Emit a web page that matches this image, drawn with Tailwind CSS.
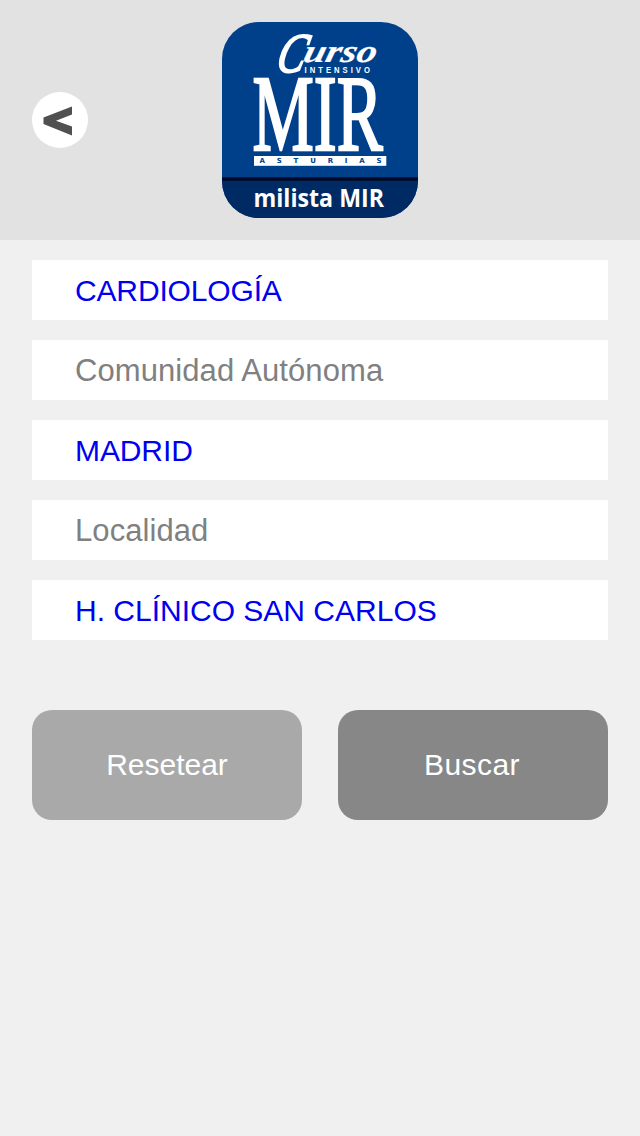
<!DOCTYPE html>
<html lang="es">
<head>
<meta charset="utf-8">
<title>milista MIR</title>
<script src="https://cdn.jsdelivr.net/npm/@tailwindcss/browser@4"></script>
</head>
<body class="min-h-screen bg-[#f0f0f0] font-['Liberation_Sans',Arial,sans-serif] text-[30px]">
<header class="grid h-60 grid-cols-[1fr_196px_1fr] items-center bg-[#e2e2e2] px-8">
  <button aria-label="Volver" class="flex size-14 items-center justify-center rounded-full bg-white">
    <svg class="size-14" viewBox="0 0 56 56"><path d="M40 14.5V22.5L24 28.7L40 34.5V43.5L11.5 32V25.5Z" fill="#505050"/></svg>
  </button>
  <svg class="size-[196px]" viewBox="0 0 196 196">
    <defs><clipPath id="tile"><rect width="196" height="196" rx="37"/></clipPath></defs>
    <g clip-path="url(#tile)">
      <rect width="196" height="196" fill="#00408a"/>
      <rect y="158" width="196" height="38" fill="#002a63"/>
      <rect y="155.3" width="196" height="3.5" fill="#000a26"/>
    </g>
    <g fill="#fff">
      <text transform="translate(52.5 49.5) skewX(-14)" font-family="Liberation Serif, serif" font-style="italic" stroke="#fff" stroke-width="2"><tspan font-size="56" textLength="28" lengthAdjust="spacingAndGlyphs">C</tspan><tspan font-size="32" font-weight="bold" stroke-width=".2" x="25" y="-10" textLength="73" lengthAdjust="spacingAndGlyphs">urso</tspan></text>
      <text transform="translate(82.5 51) scale(.78 1)" font-family="Liberation Sans, sans-serif" font-weight="bold" font-size="9.8" letter-spacing="3.9">INTENSIVO</text>
      <text transform="translate(30.5 128) scale(.632 1)" font-family="Liberation Serif, serif" font-size="109" stroke="#fff" stroke-width="2.6">MIR</text>
      <rect x="32" y="134" width="132.3" height="9.8"/>
      <text x="31.5" y="185.3" font-family="Open Sans, sans-serif" font-weight="bold" font-size="25.5" textLength="130.5" lengthAdjust="spacingAndGlyphs">milista MIR</text>
    </g>
    <text x="37.5" y="141.3" fill="#00408a" font-family="DejaVu Sans, sans-serif" font-weight="bold" font-size="7" textLength="130" letter-spacing="8">ASTURIAS</text>
  </svg>
</header>
<main class="px-8 pt-5">
  <div class="flex flex-col gap-5 text-[#0000f0]">
    <div class="flex h-15 items-center bg-white pl-[43px]"><span class="tracking-[-0.15px]">CARDIOLOGÍA</span></div>
    <div class="flex h-15 items-center bg-white pt-0.5 pl-[43px] text-[#808080]"><span class="text-[31px] tracking-[0.08px]">Comunidad Autónoma</span></div>
    <div class="flex h-15 items-center bg-white pl-[43px]"><span class="tracking-[-0.1px]">MADRID</span></div>
    <div class="flex h-15 items-center bg-white pt-0.5 pl-[43px] text-[#808080]"><span class="text-[31px] tracking-[0.08px]">Localidad</span></div>
    <div class="flex h-15 items-center bg-white pl-[43px]"><span>H. CLÍNICO SAN CARLOS</span></div>
  </div>
  <div class="mt-[70px] grid grid-cols-2 gap-9 text-white">
    <button class="h-[110px] rounded-[20px] bg-[#a9a9a9] pb-0.5">Resetear</button>
    <button class="h-[110px] rounded-[20px] bg-[#878787] pr-2 pb-0.5 pl-1.5 tracking-[0.4px]">Buscar</button>
  </div>
</main>
</body>
</html>
